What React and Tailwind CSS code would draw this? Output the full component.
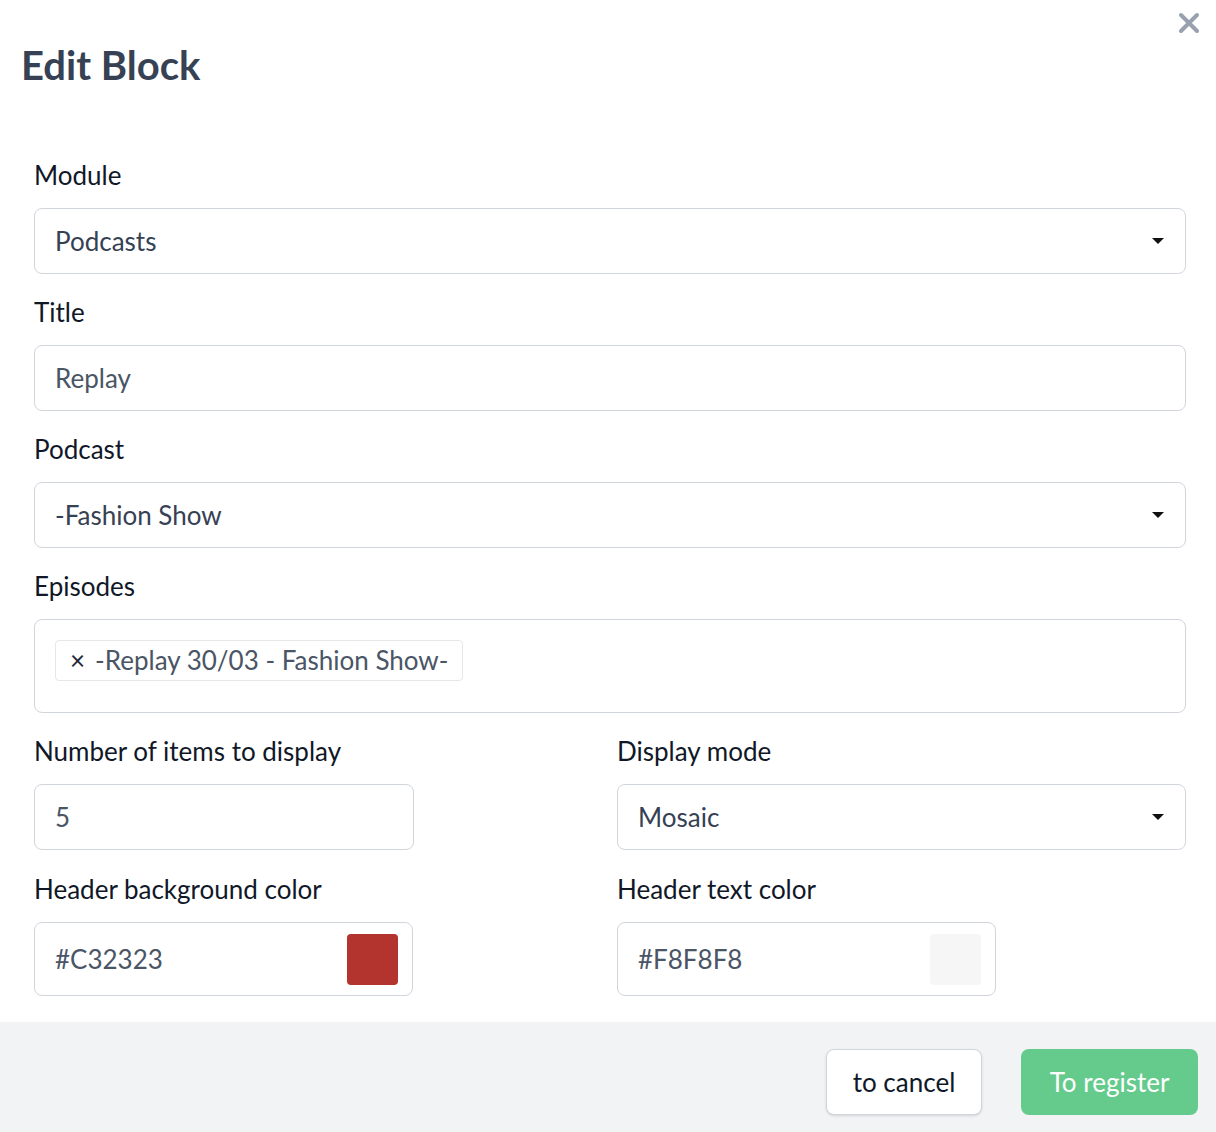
import React from 'react';

const font = { fontFamily: 'Lato, "Noto Sans", sans-serif' };

const Caret = () => (
    <svg width="14" height="8" viewBox="0 0 14 8" className="shrink-0">
        <path d="M1 1h12L7 7z" fill="#111" />
    </svg>
);

const Label = ({ children }) => (
    <label className="block text-[26px] leading-[32px] text-gray-900 mb-[17px]">{children}</label>
);

const SelectBox = ({ value }) => (
    <div className="h-[66px] rounded-lg border border-gray-300 bg-white px-5 flex items-center justify-between text-[26px] text-gray-700">
        <span>{value}</span>
        <Caret />
    </div>
);

const TextBox = ({ value }) => (
    <div className="h-[66px] rounded-lg border border-gray-300 bg-white px-5 flex items-center text-[26px] text-gray-600">
        {value}
    </div>
);

const ColorBox = ({ value, swatch }) => (
    <div className="w-[379px] h-[74px] rounded-lg border border-gray-300 bg-white pl-5 pr-[14px] flex items-center justify-between text-[26px] text-gray-600">
        <span>{value}</span>
        <span className={`w-[51px] h-[51px] rounded ${swatch}`}></span>
    </div>
);

export default function App() {
    return (
        <div className="min-h-screen bg-white relative" style={font}>
            <button className="absolute top-[12px] right-[16px] text-gray-400">
                <svg width="22" height="22" viewBox="0 0 22 22">
                    <path d="M3 3L19 19M19 3L3 19" stroke="currentColor" strokeWidth="4" strokeLinecap="round" />
                </svg>
            </button>
            <div className="pt-[42px] px-[21px]">
                <h1 className="text-[40px] leading-[46px] font-bold text-gray-700">Edit Block</h1>
            </div>
            <div className="pl-[34px] pr-[30px] pt-[71px] pb-[26px] flex flex-col gap-[22px]">
                <div>
                    <Label>Module</Label>
                    <SelectBox value="Podcasts" />
                </div>
                <div>
                    <Label>Title</Label>
                    <TextBox value="Replay" />
                </div>
                <div>
                    <Label>Podcast</Label>
                    <SelectBox value="-Fashion Show" />
                </div>
                <div>
                    <Label>Episodes</Label>
                    <div className="h-[94px] rounded-lg border border-gray-300 bg-white px-5 pt-5">
                        <span className="inline-flex items-center h-[41px] px-[14px] rounded border border-gray-200 text-[26px] text-gray-600">
                            <span className="text-gray-800 mr-[10px]">×</span>-Replay 30/03 - Fashion Show-
                        </span>
                    </div>
                </div>
                <div className="grid grid-cols-[380px_1fr] gap-x-[203px] gap-y-[23px]">
                    <div>
                        <Label>Number of items to display</Label>
                        <TextBox value="5" />
                    </div>
                    <div>
                        <Label>Display mode</Label>
                        <SelectBox value="Mosaic" />
                    </div>
                    <div>
                        <Label>Header background color</Label>
                        <ColorBox value="#C32323" swatch="bg-[#b3332e]" />
                    </div>
                    <div>
                        <Label>Header text color</Label>
                        <ColorBox value="#F8F8F8" swatch="bg-[#f6f6f6]" />
                    </div>
                </div>
            </div>
            <div className="bg-[#f2f3f5] h-[111px] flex items-start pt-[27px] justify-end gap-[39px] pr-[18px]">
                <button className="h-[66px] w-[156px] rounded-lg border border-gray-300 bg-white text-[26px] text-gray-900 shadow-sm">
                    to cancel
                </button>
                <button className="h-[66px] w-[177px] rounded-lg bg-[#65cb8d] text-[26px] text-white">
                    To register
                </button>
            </div>
        </div>
    );
}
